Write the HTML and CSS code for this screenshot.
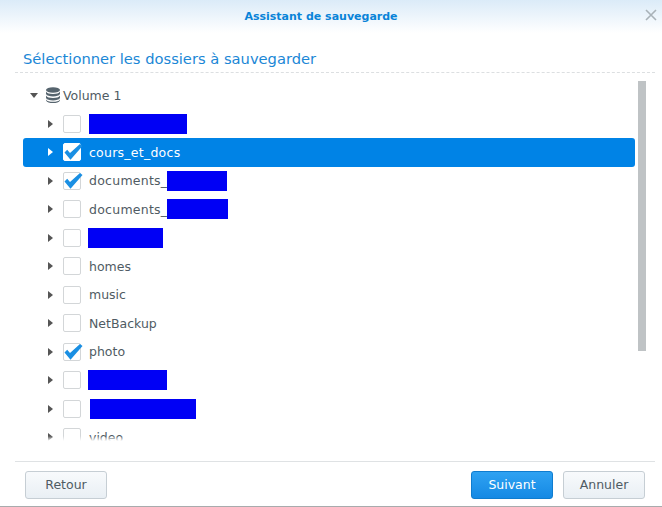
FILE: index.html
```html
<!DOCTYPE html>
<html lang="fr">
<head>
<meta charset="utf-8">
<title>Assistant de sauvegarde</title>
<link rel="stylesheet" href="styles.css">
</head>
<body>
<div class="dialog">
  <header class="titlebar">
    <span class="title">Assistant de sauvegarde</span>
    <svg class="close" viewBox="0 0 12 12" width="12" height="12"><path d="M1 1 11 11M11 1 1 11" stroke="#a9b2b8" stroke-width="1.6" fill="none"/></svg>
  </header>
  <h2 class="heading">Sélectionner les dossiers à sauvegarder</h2>
  <div class="body">
    <div class="tree">
      <div class="row">
        <svg class="arrow-down" viewBox="0 0 8 5" width="8" height="5"><path d="M0 0H8L4 5Z" fill="#555"/></svg>
        <svg class="db" viewBox="0 0 14 16" width="14" height="16">
          <ellipse cx="7" cy="3" rx="7" ry="2.8" fill="#56646e"/>
          <path d="M0 4.600C1 6.400 3.600 7 7 7s6-.6 7-2.400V7C13 8.800 10.400 9.400 7 9.400S1 8.800 0 7Z" fill="#56646e"/>
          <path d="M0 8.600C1 10.400 3.600 11 7 11s6-.6 7-2.400V11c-1 1.800-3.600 2.400-7 2.400S1 12.800 0 11Z" fill="#56646e"/>
          <path d="M0 12.400C1 14.200 3.600 14.800 7 14.800s6-.6 7-2.400V13.400C13 15.200 10.400 16 7 16S1 15.200 0 13.400Z" fill="#56646e"/>
        </svg>
        <span class="label">Volume 1</span>
      </div>
      <div class="row child">
        <i class="arrow"></i><i class="box"></i><span class="name"><span class="redact r1"></span></span>
      </div>
      <div class="row child selected">
        <i class="arrow"></i><i class="box checked"><svg class="check" viewBox="0 0 20 18" width="20" height="18"><path d="M1.500 9.500 4.200 6.800 7 10 17 1 19.500 3 7.500 16.800Z" fill="#1a8fe3"/></svg></i><span class="name wide">cours_et_docs</span>
      </div>
      <div class="row child">
        <i class="arrow"></i><i class="box checked"><svg class="check" viewBox="0 0 20 18" width="20" height="18"><path d="M1.500 9.500 4.200 6.800 7 10 17 1 19.500 3 7.500 16.800Z" fill="#1a8fe3"/></svg></i><span class="name wide">documents_<span class="redact r2"></span></span>
      </div>
      <div class="row child">
        <i class="arrow"></i><i class="box"></i><span class="name wide">documents_<span class="redact r3"></span></span>
      </div>
      <div class="row child">
        <i class="arrow"></i><i class="box"></i><span class="name"><span class="redact r4"></span></span>
      </div>
      <div class="row child">
        <i class="arrow"></i><i class="box"></i><span class="name">homes</span>
      </div>
      <div class="row child">
        <i class="arrow"></i><i class="box"></i><span class="name">music</span>
      </div>
      <div class="row child">
        <i class="arrow"></i><i class="box"></i><span class="name">NetBackup</span>
      </div>
      <div class="row child">
        <i class="arrow"></i><i class="box checked"><svg class="check" viewBox="0 0 20 18" width="20" height="18"><path d="M1.500 9.500 4.200 6.800 7 10 17 1 19.500 3 7.500 16.800Z" fill="#1a8fe3"/></svg></i><span class="name">photo</span>
      </div>
      <div class="row child">
        <i class="arrow"></i><i class="box"></i><span class="name"><span class="redact r5"></span></span>
      </div>
      <div class="row child">
        <i class="arrow"></i><i class="box"></i><span class="name"><span class="redact r6"></span></span>
      </div>
      <div class="row child">
        <i class="arrow"></i><i class="box"></i><span class="name">video</span>
      </div>
    </div>
    <div class="scrolltrack"><div class="thumb"></div></div>
  </div>
  <footer class="footer">
    <button class="btn">Retour</button>
    <span class="spacer"></span>
    <button class="btn primary">Suivant</button>
    <button class="btn">Annuler</button>
  </footer>
</div>
</body>
</html>
```
FILE: styles.css
```css
* { box-sizing: border-box; }
html, body { margin: 0; padding: 0; background: #fff; }
body { width: 662px; height: 507px; overflow: hidden; font-family: "DejaVu Sans", Verdana, sans-serif; }
.dialog { width: 662px; height: 507px; display: flex; flex-direction: column; border-bottom: 1px solid #a8abad; }
.titlebar { height: 33px; flex: none; display: flex; align-items: center; justify-content: center; position: relative; padding: 0 20px 1px 0; background: linear-gradient(#dbebf8, #ffffff); }
.title { font-size: 11px; font-weight: 700; color: #0a84d8; }
.close { position: absolute; right: 5px; top: 9px; }
.heading { margin: 0 7px 0 15px; height: 40px; padding: 16px 0 0 8px; font-size: 14.7px; line-height: 20px; font-weight: 400; color: #1b87d6; border-bottom: 1px dashed #dcdfe1; }
.body { height: 360px; margin-top: 8px; padding-left: 23px; display: flex; flex: none; align-items: flex-start; }
.tree { width: 612px; height: 360px; overflow: hidden; position: relative; font-size: 12.5px; color: #4f5b63; }
.tree::after { content: ""; position: absolute; left: 0; right: 0; bottom: 0; height: 5px; background: linear-gradient(rgba(255,255,255,0), #fff); }
.row { height: 28.5px; display: flex; align-items: center; border-radius: 3px; }
.arrow-down { margin-left: 7px; flex: none; }
.db { margin-left: 8px; flex: none; }
.label { margin-left: 3px; }
.arrow { width: 0; height: 0; margin-left: 25px; flex: none; border-left: 5px solid #555; border-top: 4px solid transparent; border-bottom: 4px solid transparent; }
.box { width: 18px; height: 18px; margin-left: 10px; flex: none; position: relative; background: #fff; border: 1px solid #d3d6d8; border-radius: 2px; }
.check { position: absolute; left: -1px; top: -1px; }
.name { margin-left: 8px; white-space: nowrap; display: flex; align-items: center; }
.wide { letter-spacing: .25px; }
.selected { background: #0083e6; color: #fff; }
.selected .arrow { border-left-color: #fff; }
.selected .box { border-color: #fff; }
.redact { display: block; height: 20px; background: #0000f5; }
.r1 { width: 98px; }
.r2 { width: 60px; }
.r3 { width: 61px; }
.r4 { width: 75px; margin-left: -1px; }
.r5 { width: 79px; margin-left: -1px; }
.r6 { width: 106px; margin-left: 1px; }
.scrolltrack { width: 8px; height: 270px; margin-left: 3px; flex: none; }
.thumb { height: 100%; background: #bfc3c5; }
.footer { margin: 20px 7px 0 15px; flex: 1; border-top: 1px solid #dfe2e4; padding: 9px 10px 0 10px; display: flex; align-items: flex-start; gap: 10px; }
.spacer { flex: 1; }
.btn { width: 82px; height: 28px; padding: 0 0 2px; font: 12.5px "DejaVu Sans", Verdana, sans-serif; color: #4f5b63; background: linear-gradient(#f8fafc, #e9eff4); border: 1px solid #c6ced4; border-radius: 3px; }
.primary { color: #fff; background: linear-gradient(#2fa2f2, #1589e4); border-color: #0f7ccf; }
```
